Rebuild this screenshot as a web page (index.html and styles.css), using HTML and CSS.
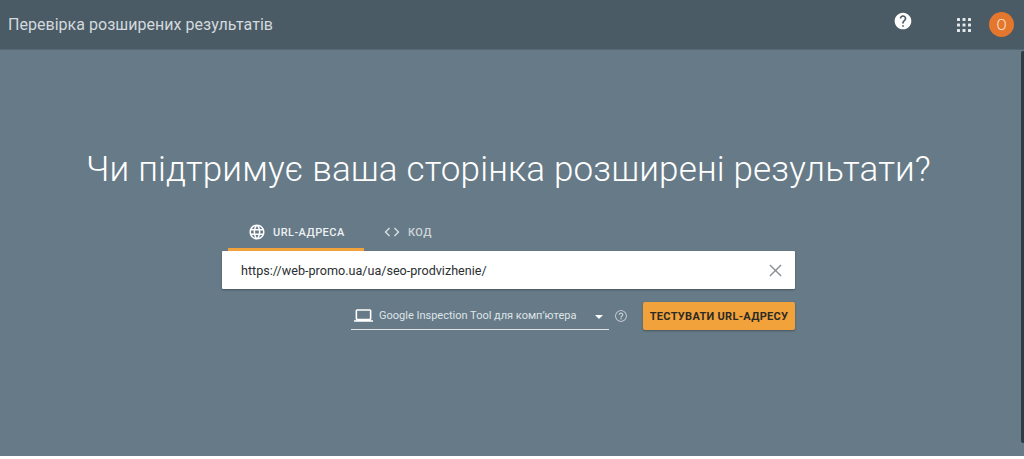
FILE: index.html
```html
<!DOCTYPE html>
<html lang="uk">
<head>
<meta charset="utf-8">
<title>Перевірка розширених результатів</title>
<link rel="stylesheet" href="styles.css">
</head>
<body>
<div class="app">
  <header class="topbar">
    <div class="brand">Перевірка розширених результатів</div>
    <div class="actions">
      <svg class="help" viewBox="0 0 24 24"><path fill="#fff" d="M12 2C6.48 2 2 6.48 2 12s4.48 10 10 10 10-4.48 10-10S17.52 2 12 2zm1 17h-2v-2h2v2zm2.07-7.75-.9.92C13.45 12.9 13 13.5 13 15h-2v-.5c0-1.1.45-2.1 1.17-2.83l1.24-1.26c.37-.36.59-.86.59-1.41 0-1.1-.9-2-2-2s-2 .9-2 2H8c0-2.21 1.79-4 4-4s4 1.79 4 4c0 .88-.36 1.68-.93 2.25z"/></svg>
      <svg class="apps" viewBox="0 0 14 14"><g fill="#e4e8ea"><rect x="0" y="0" width="3" height="3" rx=".6"/><rect x="5.5" y="0" width="3" height="3" rx=".6"/><rect x="11" y="0" width="3" height="3" rx=".6"/><rect x="0" y="5.5" width="3" height="3" rx=".6"/><rect x="5.5" y="5.5" width="3" height="3" rx=".6"/><rect x="11" y="5.5" width="3" height="3" rx=".6"/><rect x="0" y="11" width="3" height="3" rx=".6"/><rect x="5.5" y="11" width="3" height="3" rx=".6"/><rect x="11" y="11" width="3" height="3" rx=".6"/></g></svg>
      <div class="avatar">О</div>
    </div>
  </header>
  <main class="hero">
    <h1 class="title">Чи підтримує ваша сторінка розширені результати?</h1>
    <div class="form">
      <nav class="tabs">
        <div class="tab tab-active">
          <svg class="tab-icon" viewBox="0 0 24 24"><path fill="#fff" d="M11.99 2C6.47 2 2 6.48 2 12s4.47 10 9.99 10C17.52 22 22 17.52 22 12S17.52 2 11.99 2zm6.93 6h-2.95a15.65 15.65 0 0 0-1.38-3.56A8.03 8.03 0 0 1 18.92 8zM12 4.04c.83 1.2 1.48 2.53 1.91 3.96h-3.82c.43-1.43 1.08-2.76 1.91-3.96zM4.26 14C4.1 13.36 4 12.69 4 12s.1-1.36.26-2h3.38c-.08.66-.14 1.32-.14 2s.06 1.34.14 2H4.26zm.82 2h2.95c.32 1.25.78 2.45 1.38 3.56A7.987 7.987 0 0 1 5.08 16zm2.95-8H5.08a7.987 7.987 0 0 1 4.33-3.56A15.65 15.65 0 0 0 8.03 8zM12 19.96c-.83-1.2-1.48-2.53-1.91-3.96h3.82c-.43 1.43-1.08 2.76-1.91 3.96zM14.34 14H9.66c-.09-.66-.16-1.32-.16-2s.07-1.35.16-2h4.68c.09.65.16 1.32.16 2s-.07 1.34-.16 2zm.25 5.56c.6-1.11 1.06-2.31 1.38-3.56h2.95a8.03 8.03 0 0 1-4.33 3.56zM16.36 14c.08-.66.14-1.32.14-2s-.06-1.34-.14-2h3.38c.16.64.26 1.31.26 2s-.1 1.36-.26 2h-3.38z"/></svg>
          <span>URL-АДРЕСА</span>
        </div>
        <div class="tab tab-idle">
          <svg class="tab-icon" viewBox="0 0 24 24"><path fill="#d5dbdf" d="M9.4 16.6 4.8 12l4.6-4.6L8 6l-6 6 6 6 1.4-1.4zm5.2 0 4.6-4.6-4.6-4.6L16 6l6 6-6 6-1.4-1.4z"/></svg>
          <span>КОД</span>
        </div>
      </nav>
      <div class="url-field">
        <span class="url-text">https://web-promo.ua/ua/seo-prodvizhenie/</span>
        <svg class="clear" viewBox="0 0 14 14"><path fill="none" stroke="#8a8f93" stroke-width="1.5" d="M1 1l12 12M13 1 1 13"/></svg>
      </div>
      <div class="controls">
        <div class="select">
          <svg class="laptop" viewBox="0 0 24 24"><path fill="#fff" d="M20 18c1.1 0 2-.9 2-2V6c0-1.1-.9-2-2-2H4c-1.1 0-2 .9-2 2v10c0 1.1.9 2 2 2H0v2h24v-2h-4zM4 6h16v10H4V6z"/></svg>
          <span class="select-label">Google Inspection Tool для комп’ютера</span>
          <span class="caret"></span>
        </div>
        <svg class="hint" viewBox="0 0 24 24"><path fill="#ccd3d8" d="M11 18h2v-2h-2v2zm1-16C6.48 2 2 6.48 2 12s4.48 10 10 10 10-4.48 10-10S17.52 2 12 2zm0 18.5c-4.69 0-8.5-3.81-8.5-8.5S7.31 3.5 12 3.500 20.500 7.310 20.500 12s-3.810 8.500-8.500 8.500zM12 6c-2.210 0-4 1.790-4 4h2c0-1.100.9-2 2-2s2 .9 2 2c0 2-3 1.750-3 5h2c0-2.250 3-2.500 3-5 0-2.210-1.790-4-4-4z"/></svg>
        <button class="submit">ТЕСТУВАТИ URL-АДРЕСУ</button>
      </div>
    </div>
  </main>
</div>
<div class="scroll-edge"></div>
</body>
</html>
```
FILE: styles.css
```css
* { box-sizing: border-box; }
html, body { margin: 0; height: 100%; background: #fff; overflow: hidden; }
body { font-family: Roboto, "Liberation Sans", sans-serif; }
.app { height: 456px; display: flex; flex-direction: column; background: #667a87; }
.topbar {
  height: 50px; flex: none; display: flex; align-items: center; justify-content: space-between;
  background: #4a5b66; border-bottom: 1px solid #566873; padding: 0 10px 0 8px;
}
.brand { color: #d3d9dd; font-size: 16px; letter-spacing: .03px; }
.actions { display: flex; align-items: center; }
.help { width: 20px; height: 20px; margin: -8px 1px 0 0; }
.apps { width: 14px; height: 14px; margin-left: 43px; }
.avatar {
  width: 25px; height: 25px; margin-left: 18px; border-radius: 50%; background: #e5762d;
  color: #fbe9dd; font-size: 15px; font-weight: 300; display: flex; align-items: center; justify-content: center;
}
.hero { flex: 1; display: flex; flex-direction: column; align-items: center; padding-right: 7px; }
.title { margin: 98px 0 0; color: #fff; font-size: 35px; line-height: 44px; font-weight: 300; letter-spacing: .17px; white-space: nowrap; }
.form { width: 573px; margin: 21px 0 0; }
.tabs { display: flex; padding-left: 6px; height: 38px; }
.tab { display: flex; align-items: center; font-size: 11px; font-weight: 500; letter-spacing: .45px; height: 38px; padding-top: 3px; }
.tab-active { color: #eef1f3; width: 136px; padding-left: 20px; border-bottom: 3px solid #f2a23a; }
.tab-idle { color: #d0d7db; padding-left: 19px; padding-bottom: 3px; }
.tab-icon { width: 18px; height: 18px; margin-right: 7px; }
.url-field {
  height: 38px; background: #fff; display: flex; align-items: center; justify-content: space-between;
  padding: 0 13px 0 19px; border-radius: 1px; box-shadow: 0 1px 2px rgba(0,0,0,.3);
}
.url-text { font-size: 12.6px; color: #2b2f32; }
.clear { width: 13px; height: 13px; }
.controls { display: flex; justify-content: flex-end; align-items: center; margin-top: 13px; }
.select {
  width: 258px; height: 28px; display: flex; align-items: center; padding: 0 5px 0 3px;
  border-bottom: 1px solid #dfe4e7; position: relative;
}
.laptop { width: 19px; height: 19px; margin-right: 6px; }
.select-label { font-size: 11px; color: #dfe4e7; white-space: nowrap; }
.caret {
  position: absolute; right: 6px; top: 13px; width: 0; height: 0;
  border-left: 4px solid transparent; border-right: 4px solid transparent; border-top: 4px solid #fff;
}
.hint { width: 14px; height: 14px; margin: 0 15px 0 5px; }
.submit {
  width: 152px; height: 28px; border: 0; padding: 0; border-radius: 2px; background: #f2a23a; color: #2c2a26;
  font-family: inherit; font-size: 11px; font-weight: 700; letter-spacing: .3px; white-space: nowrap;
  box-shadow: 0 1px 2px rgba(0,0,0,.3);
}
.scroll-edge { position: absolute; right: 0; top: 51px; bottom: 16px; width: 3px; background: #2f3c44; border-radius: 2px 0 0 2px; }
```
